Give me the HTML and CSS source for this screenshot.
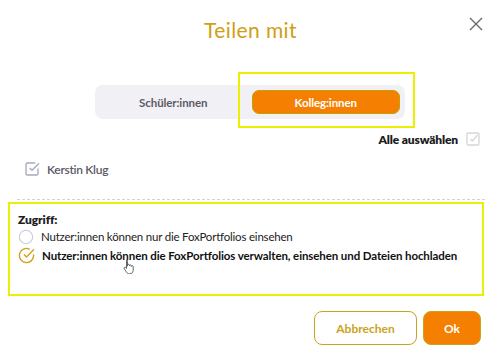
FILE: index.html
```html
<!DOCTYPE html>
<html lang="de">
<head>
<meta charset="utf-8">
<title>Teilen mit</title>
<link rel="stylesheet" href="styles.css">
</head>
<body>
<div class="dialog">
  <header class="head">
    <h1 class="title">Teilen mit</h1>
    <button class="close" aria-label="Schließen">
      <svg width="14" height="14" viewBox="0 0 14 14"><path d="M1 1L13 13M13 1L1 13" stroke="#6b6b6b" stroke-width="1.4" fill="none"/></svg>
    </button>
  </header>

  <div class="seg-row">
    <div class="seg">
      <button class="seg-btn">Schüler:innen</button>
      <button class="seg-btn active">Kolleg:innen</button>
      <span class="mark-top"></span>
    </div>
  </div>

  <div class="select-all">
    <span>Alle auswählen</span>
    <svg class="box-light" width="16" height="16" viewBox="0 0 24 24"><rect x="3" y="3" width="18" height="18" rx="2" fill="none" stroke="#d6d6d6" stroke-width="2"/><polyline points="8 12 11 15 19 6" fill="none" stroke="#d6d6d6" stroke-width="2"/></svg>
  </div>

  <div class="person">
    <svg width="16" height="16" viewBox="0 0 24 24" fill="none" stroke="#a9a9bb" stroke-width="2" stroke-linecap="round" stroke-linejoin="round"><polyline points="9 11 12 14 22 4"/><path d="M21 12v7a2 2 0 0 1-2 2H5a2 2 0 0 1-2-2V5a2 2 0 0 1 2-2h11"/></svg>
    <span>Kerstin Klug</span>
  </div>

  <div class="divider"></div>

  <section class="access">
    <div class="access-title">Zugriff:</div>
    <label class="opt">
      <svg width="16" height="16" viewBox="0 0 24 24"><circle cx="12" cy="12" r="10" fill="none" stroke="#c9c9df" stroke-width="1.6"/></svg>
      <span>Nutzer:innen können nur die FoxPortfolios einsehen</span>
    </label>
    <label class="opt sel">
      <svg width="17" height="17" viewBox="0 0 24 24" fill="none" stroke="#d3a21c" stroke-width="2" stroke-linecap="round" stroke-linejoin="round"><path d="M22 11.08V12a10 10 0 1 1-5.93-9.14"/><polyline points="22 4 12 14.01 9 11.01"/></svg>
      <span>Nutzer:innen können die FoxPortfolios verwalten, einsehen und Dateien hochladen</span>
      <svg class="cursor" width="12" height="15" viewBox="0 0 12 15"><path d="M3.5 1.2c.6 0 1 .4 1 1v5l.1-1.1c.1-.5.5-.8 1-.8s.9.4.9.9v.6c.1-.5.5-.8 1-.8s.9.4.9.9v.5c.1-.4.5-.7.9-.7.5 0 .9.4.9.9v3.6c0 2-1.4 3.6-3.4 3.6H6.1c-1.1 0-2-.6-2.6-1.5L1.2 9.6c-.3-.5-.1-1 .3-1.3.4-.3 1-.2 1.3.2l.7 1V2.2c0-.6.4-1 1-1z" fill="#fff" stroke="#555" stroke-width=".9"/></svg>
    </label>
  </section>

  <footer class="foot">
    <button class="btn btn-outline">Abbrechen</button>
    <button class="btn btn-primary">Ok</button>
  </footer>
</div>
</body>
</html>
```

FILE: styles.css
```css
* { box-sizing: border-box; }
html, body { margin: 0; padding: 0; background: #fff; }
body {
  font-family: "Lato", "Noto Sans", sans-serif;
  color: #1f1f1f;
  width: 501px;
  height: 362px;
  overflow: hidden;
}
button { font-family: inherit; cursor: pointer; }

.dialog {
  width: 501px;
  height: 362px;
  display: flex;
  flex-direction: column;
}

.head {
  position: relative;
  display: flex;
  justify-content: center;
  padding-top: 17px;
  height: 72px;
}
.title {
  margin: 0;
  font-size: 21px;
  font-weight: 400;
  color: #d09e14;
  letter-spacing: 0.4px;
  line-height: 26px;
}
.close {
  position: absolute;
  top: 17px;
  right: 18px;
  border: 0;
  background: none;
  padding: 0;
  width: 14px;
  height: 14px;
  display: flex;
}

.seg-row {
  display: flex;
  justify-content: center;
  padding-left: 95px;
  padding-right: 96px;
  margin-top: 13px;
}
.seg {
  position: relative;
  flex: 1;
  display: flex;
  background: #f1f0f5;
  border-radius: 8px;
  padding: 5px;
  height: 34px;
}
.seg-btn {
  flex: 1;
  border: 0;
  background: none;
  font-size: 11.5px;
  font-weight: 700;
  letter-spacing: -0.1px;
  color: #5b5b66;
  border-radius: 7px;
  padding: 0;
}
.seg-btn.active {
  background: #f57f00;
  color: #fff;
  border: 1px solid #c5a000;
  margin-left: 5px;
}
.mark-top {
  position: absolute;
  left: 143px;
  top: -13px;
  width: 177px;
  height: 56px;
  border: 2px solid #ecf000;
  pointer-events: none;
}

.select-all {
  display: flex;
  justify-content: flex-end;
  align-items: center;
  gap: 7px;
  padding-right: 20px;
  margin-top: 12px;
  font-size: 12px;
  font-weight: 800;
  letter-spacing: -0.15px;
  color: #1c1c1c;
}

.person {
  display: flex;
  align-items: center;
  gap: 7px;
  padding-left: 24px;
  margin-top: 14px;
  font-size: 12px;
  font-weight: 600;
  letter-spacing: -0.3px;
  color: #5a5a66;
}

.divider {
  margin: 22px 16px 0 17px;
  border-top: 1px dashed #d3d3d3;
}

.access {
  margin: 2px 17px 0 8px;
  border: 2px solid #eaf000;
  padding: 8px 8px 0 8px;
  height: 94px;
}
.access-title {
  font-size: 12px;
  font-weight: 800;
  line-height: 16px;
  letter-spacing: -0.1px;
}
.opt {
  position: relative;
  display: flex;
  align-items: center;
  gap: 7px;
  font-size: 11.5px;
  letter-spacing: -0.2px;
  line-height: 16px;
  margin-top: 1px;
  color: #222;
  white-space: nowrap;
}
.opt.sel { font-weight: 700; margin-top: 2px; color: #111; letter-spacing: -0.1px; }
.cursor {
  position: absolute;
  left: 105px;
  top: 12px;
}

.foot {
  display: flex;
  justify-content: flex-end;
  gap: 6px;
  padding-right: 20px;
  margin-top: 15px;
}
.btn {
  height: 34px;
  border-radius: 8px;
  font-size: 12px;
  font-weight: 700;
}
.btn-outline {
  width: 103px;
  background: #fff;
  border: 1.5px solid #c9a41e;
  color: #c9a41e;
}
.btn-primary {
  width: 58px;
  background: #f57f00;
  border: 1px solid #c9a41e;
  color: #fff;
}
```
